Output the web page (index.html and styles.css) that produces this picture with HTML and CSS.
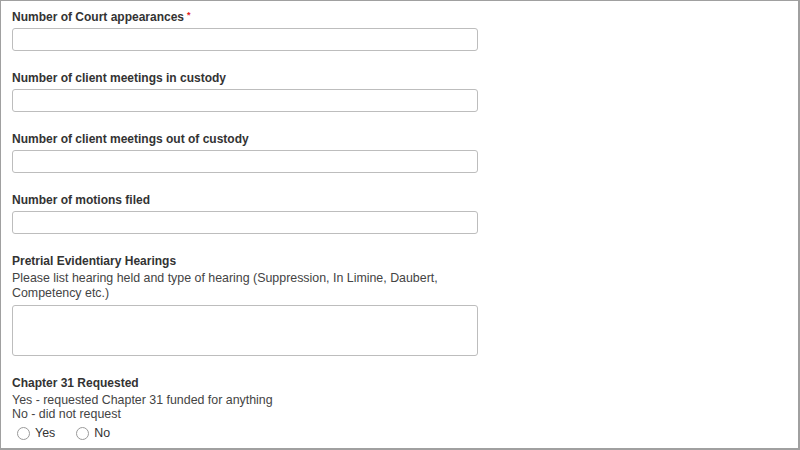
FILE: index.html
```html
<!DOCTYPE html>
<html>
<head>
<meta charset="utf-8">
<link rel="stylesheet" href="styles.css">
</head>
<body>
<div class="frame">
  <form class="form">
    <div class="field">
      <label class="label">Number of Court appearances<span class="req">*</span></label>
      <input class="input" type="text">
    </div>
    <div class="field">
      <label class="label">Number of client meetings in custody</label>
      <input class="input" type="text">
    </div>
    <div class="field">
      <label class="label">Number of client meetings out of custody</label>
      <input class="input" type="text">
    </div>
    <div class="field">
      <label class="label">Number of motions filed</label>
      <input class="input" type="text">
    </div>
    <div class="field">
      <label class="label">Pretrial Evidentiary Hearings</label>
      <div class="help">Please list hearing held and type of hearing (Suppression, In Limine, Daubert, Competency etc.)</div>
      <textarea class="textarea"></textarea>
    </div>
    <div class="field last">
      <label class="label">Chapter 31 Requested</label>
      <div class="help">Yes - requested Chapter 31 funded for anything<br>No - did not request</div>
      <div class="radios">
        <label class="radio"><span class="dot"></span>Yes</label>
        <label class="radio"><span class="dot"></span>No</label>
      </div>
    </div>
  </form>
</div>
</body>
</html>
```
FILE: styles.css
```css
html, body {
  margin: 0;
  padding: 0;
  background: #fff;
}
.frame {
  width: 800px;
  height: 450px;
  box-sizing: border-box;
  border-top: 1px solid #a0a0a0;
  border-left: 1px solid #a0a0a0;
  border-right: 2px solid #a0a0a0;
  border-bottom: 2px solid #a0a0a0;
  overflow: hidden;
  font-family: Arial, "Liberation Sans", sans-serif;
  font-size: 12px;
  color: #333;
}
.form {
  padding: 9px 0 0 11px;
  width: 467px;
  display: flex;
  flex-direction: column;
}
.field {
  display: flex;
  flex-direction: column;
  margin-bottom: 20px;
}
.label {
  font-weight: bold;
  line-height: 15px;
  margin-bottom: 3px;
  color: #333;
}
.req {
  color: #e02020;
  font-size: 9px;
  line-height: 0;
  vertical-align: 3px;
  margin-left: 3px;
}
.input {
  display: block;
  box-sizing: border-box;
  width: 466px;
  height: 23px;
  border: 1px solid #bdbdbd;
  border-radius: 3px;
  margin: 0;
  padding: 0;
  background: #fff;
}
.help {
  font-size: 12.4px;
  line-height: 15px;
  color: #444;
  margin-top: -1px;
  margin-bottom: 4px;
}
.textarea {
  display: block;
  box-sizing: border-box;
  width: 466px;
  height: 51px;
  border: 1px solid #bdbdbd;
  border-radius: 3px;
  margin: 0;
  padding: 0;
  resize: none;
  background: #fff;
}
.field.last {
  margin-top: 0;
}
.field.last .label {
  margin-bottom: 3px;
}
.field.last .help {
  line-height: 14px;
  margin-bottom: 4px;
}
.radios {
  display: flex;
  gap: 21px;
  padding-left: 5px;
}
.radio {
  display: flex;
  align-items: center;
  font-size: 12.4px;
  line-height: 16px;
  color: #333;
}
.dot {
  width: 11px;
  height: 11px;
  border: 1px solid #9a9a9a;
  border-radius: 50%;
  margin-right: 5px;
  background: #fff;
}
```
